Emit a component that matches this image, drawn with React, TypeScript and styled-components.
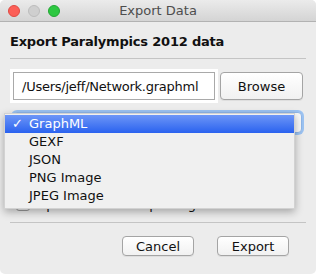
import React from "react";
import styled, { createGlobalStyle } from "styled-components";

const Global = createGlobalStyle`
  html, body { margin: 0; padding: 0; background: #ffffff; }
  body { font-family: "DejaVu Sans", "Liberation Sans", sans-serif; }
  * { box-sizing: border-box; }
`;

const Window = styled.div`
  position: relative;
  width: 316px;
  height: 274px;
  background: #ececec;
  border-radius: 5px;
  overflow: hidden;
`;

const TitleBar = styled.div`
  position: relative;
  height: 22px;
  display: flex;
  align-items: center;
  justify-content: center;
  background: linear-gradient(#ebebeb, #d4d4d4);
  border-bottom: 1px solid #b2b2b2;
`;

const Lights = styled.div`
  position: absolute;
  left: 8px;
  top: 5px;
  display: flex;
  gap: 8px;
`;

const Light = styled.span<{ $fill: string; $edge: string }>`
  width: 12px;
  height: 12px;
  border-radius: 50%;
  background: ${(p) => p.$fill};
  border: 1px solid ${(p) => p.$edge};
`;

const Title = styled.div`
  font-size: 13px;
  color: #4d4d4d;
`;

const Body = styled.div`
  position: relative;
  padding: 0 10px;
  display: flex;
  flex-direction: column;
`;

const Heading = styled.div`
  margin-top: 11px;
  height: 18px;
  line-height: 18px;
  font-size: 13px;
  letter-spacing: -0.2px;
  font-weight: bold;
  color: #111;
`;

const Rule = styled.div<{ $top: number }>`
  margin-top: ${(p) => p.$top}px;
  height: 1px;
  background: #c4c4c4;
`;

const FieldRow = styled.div`
  margin-top: 10px;
  display: flex;
  align-items: center;
`;

const Field = styled.div`
  margin: 3px;
  width: 202px;
  height: 28px;
  background: #fff;
  border: 1px solid #a9a9a9;
  box-shadow: 0 0 0 3px #ffffff;
  padding-left: 8px;
  display: flex;
  align-items: center;
  font-size: 13px;
  letter-spacing: -0.25px;
  color: #111;
  white-space: nowrap;
  overflow: hidden;
`;

const Button = styled.div<{ $w: number; $h: number }>`
  width: ${(p) => p.$w}px;
  height: ${(p) => p.$h}px;
  border: 1px solid #a4a4a4;
  border-radius: 4px;
  background: linear-gradient(#ffffff, #f1f1f1);
  box-shadow: 0 1px 0 rgba(0, 0, 0, 0.06);
  display: flex;
  align-items: center;
  justify-content: center;
  font-size: 13px;
  color: #111;
`;

const SelectRow = styled.div`
  margin-top: 9px;
  display: flex;
  padding: 0 3px;
`;

const Select = styled.div`
  flex: 1;
  height: 21px;
  margin-right: 1px;
  border-radius: 4px;
  border: 1px solid #8fb6e8;
  background: #f8f8f8;
  box-shadow: 0 0 0 2px #9cc3f2;
`;

const CheckRow = styled.div`
  margin-top: 64px;
  margin-left: 6px;
  display: flex;
  align-items: center;
  gap: 6px;
  height: 14px;
  font-size: 13px;
  color: #111;
`;

const Box = styled.span`
  width: 14px;
  height: 14px;
  border: 1px solid #9a9a9a;
  border-radius: 3px;
  background: linear-gradient(#ffffff, #f0f0f0);
`;

const Actions = styled.div`
  margin-top: 13px;
  display: flex;
  justify-content: flex-end;
  gap: 23px;
  padding-right: 17px;
`;

const Menu = styled.div`
  position: absolute;
  left: 4px;
  top: 113px;
  width: 291px;
  padding: 1px 0 3px;
  background: #f0f0f0;
  border: 1px solid rgba(0, 0, 0, 0.12);
  box-shadow: 0 3px 8px rgba(0, 0, 0, 0.3);
`;

const Item = styled.div<{ $active?: boolean }>`
  position: relative;
  height: 18px;
  line-height: 18px;
  padding-left: 24px;
  font-size: 13px;
  color: ${(p) => (p.$active ? "#ffffff" : "#111")};
  background: ${(p) =>
    p.$active ? "linear-gradient(#6d96f7, #2a62ef)" : "transparent"};
`;

const Check = styled.span`
  position: absolute;
  left: 7px;
  top: 0;
`;

const formats = ["GraphML", "GEXF", "JSON", "PNG Image", "JPEG Image"];

export default function App() {
  return (
    <>
      <Global />
      <Window>
        <TitleBar>
          <Lights>
            <Light $fill="#fc5f57" $edge="#de4a43" />
            <Light $fill="#cfcfcf" $edge="#bcbcbc" />
            <Light $fill="#2dc841" $edge="#23a634" />
          </Lights>
          <Title>Export Data</Title>
        </TitleBar>
        <Body>
          <Heading>Export Paralympics 2012 data</Heading>
          <Rule $top={7} />
          <FieldRow>
            <Field>/Users/jeff/Network.graphml</Field>
            <Button $w={83} $h={28} style={{ marginLeft: 2 }}>
              Browse
            </Button>
          </FieldRow>
          <SelectRow>
            <Select />
          </SelectRow>
          <CheckRow>
            <Box />
            <span>Open file after exporting</span>
          </CheckRow>
          <Rule $top={11} />
          <Actions>
            <Button $w={72} $h={20}>Cancel</Button>
            <Button $w={72} $h={20}>Export</Button>
          </Actions>
        </Body>
        <Menu>
          {formats.map((f, i) => (
            <Item key={f} $active={i === 0}>
              {i === 0 && <Check>✓</Check>}
              {f}
            </Item>
          ))}
        </Menu>
      </Window>
    </>
  );
}
